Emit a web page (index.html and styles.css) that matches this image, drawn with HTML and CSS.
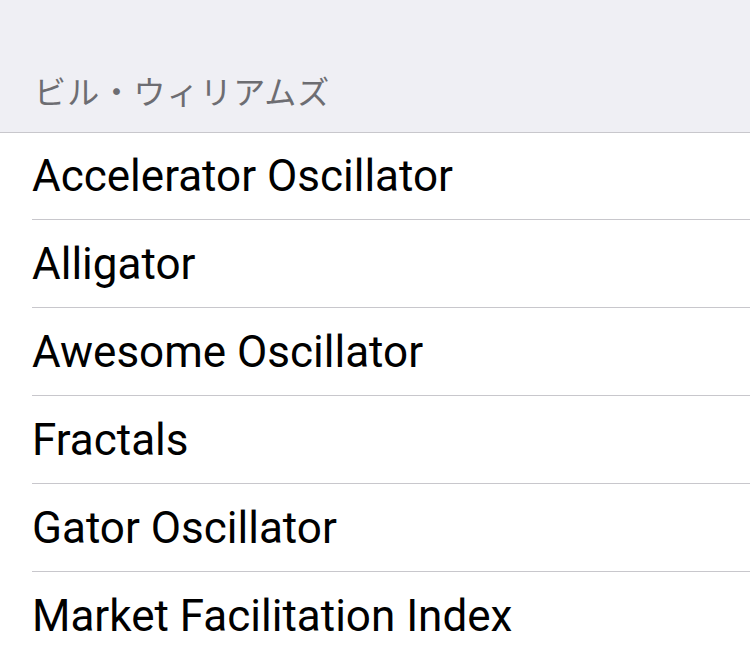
FILE: index.html
```html
<!DOCTYPE html>
<html lang="ja">
<head>
<meta charset="utf-8">
<link rel="stylesheet" href="styles.css">
</head>
<body>
<div class="header"><span class="header-title">ビル・ウィリアムズ</span></div>
<ul class="list">
  <li class="row"><span class="label">Accelerator Oscillator</span></li>
  <li class="row"><span class="label">Alligator</span></li>
  <li class="row"><span class="label">Awesome Oscillator</span></li>
  <li class="row"><span class="label">Fractals</span></li>
  <li class="row"><span class="label">Gator Oscillator</span></li>
  <li class="row"><span class="label">Market Facilitation Index</span></li>
</ul>
</body>
</html>
```
FILE: styles.css
```css
html, body {
  margin: 0;
  padding: 0;
  background: #ffffff;
  overflow: hidden;
}
body {
  width: 750px;
  height: 653px;
  font-family: Roboto, "Noto Sans CJK JP", sans-serif;
}
.header {
  box-sizing: border-box;
  height: 133px;
  background: #efeff4;
  border-bottom: 1px solid #c8c7cc;
  display: flex;
  align-items: flex-end;
  padding: 0 0 22px 34px;
}
.header-title {
  font-family: "Noto Sans CJK JP", sans-serif;
  font-size: 32px;
  line-height: 40px;
  letter-spacing: 1.2px;
  color: #6d6d72;
}
.list {
  list-style: none;
  margin: 0;
  padding: 0;
}
.row {
  margin-left: 32px;
  height: 88px;
  box-sizing: border-box;
  border-bottom: 1px solid #c8c7cc;
  display: flex;
  align-items: center;
}
.row:first-child {
  height: 87px;
}
.label {
  font-size: 44px;
  color: #000000;
  line-height: 1;
}
```
